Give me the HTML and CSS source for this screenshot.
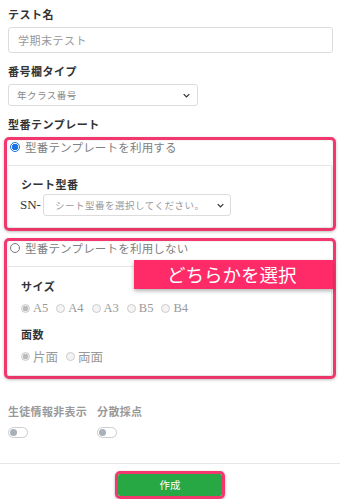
FILE: index.html
```html
<!DOCTYPE html>
<html lang="ja">
<head>
<meta charset="utf-8">
<link rel="stylesheet" href="styles.css">
</head>
<body>
<div class="page">
  <div class="label first">テスト名</div>
  <div class="input">学期末テスト</div>

  <div class="label l2">番号欄タイプ</div>
  <div class="select sel1"><span>年クラス番号</span><svg class="chev" viewBox="0 0 10 6" width="7" height="5"><path d="M1 1l4 4 4-4" fill="none" stroke="#333" stroke-width="1.8"/></svg></div>

  <div class="label l3">型番テンプレート</div>

  <div class="hl box1">
    <div class="radio-row"><span class="radio on"></span><span class="rtext">型番テンプレートを利用する</span></div>
    <div class="card c1">
      <div class="sublabel">シート型番</div>
      <div class="sn-row"><span class="sn">SN-</span><div class="select sel2"><span>シート型番を選択してください。</span><svg class="chev" viewBox="0 0 10 6" width="7" height="5"><path d="M1 1l4 4 4-4" fill="none" stroke="#333" stroke-width="1.8"/></svg></div></div>
    </div>
  </div>

  <div class="hl box2">
    <div class="radio-row"><span class="radio"></span><span class="rtext">型番テンプレートを利用しない</span></div>
    <div class="card c2">
      <div class="sublabel">サイズ</div>
      <div class="opts">
        <span class="opt"><span class="dot sel"></span>A5</span>
        <span class="opt"><span class="dot"></span>A4</span>
        <span class="opt"><span class="dot"></span>A3</span>
        <span class="opt"><span class="dot"></span>B5</span>
        <span class="opt"><span class="dot"></span>B4</span>
      </div>
      <div class="sublabel s2">面数</div>
      <div class="opts">
        <span class="opt"><span class="dot sel"></span>片面</span>
        <span class="opt"><span class="dot"></span>両面</span>
      </div>
    </div>
    <div class="badge">どちらかを選択</div>
  </div>

  <div class="toggles">
    <div class="tg"><div class="tlabel">生徒情報非表示</div><span class="switch"></span></div>
    <div class="tg"><div class="tlabel">分散採点</div><span class="switch"></span></div>
  </div>
</div>
<div class="footer">
  <div class="btn-hl"><div class="btn">作成</div></div>
</div>
</body>
</html>
```

FILE: styles.css
```css
* { box-sizing: border-box; }
html, body { margin: 0; padding: 0; background: #fff; }
body {
  width: 340px;
  font-family: "Liberation Serif", "Noto Sans CJK JP", serif;
  color: #333;
}
.page { padding: 8px 7px 0 8px; }

.label {
  font-size: 11px;
  line-height: 14px;
  font-weight: bold;
  color: #333;
  letter-spacing: 0.5px;
}
.label.l2 { margin-top: 12px; }
.label.l3 { margin-top: 12px; }

.input {
  margin-top: 5px;
  height: 26px;
  border: 1px solid #dcdcdc;
  border-radius: 3px;
  font-size: 11px;
  color: #999;
  padding: 0 9px;
  display: flex;
  align-items: center;
  letter-spacing: 0.5px;
}

.select {
  display: flex;
  align-items: center;
  justify-content: space-between;
  border: 1px solid #dcdcdc;
  border-radius: 3px;
  font-size: 9.5px;
  color: #888;
  letter-spacing: 0.5px;
}
.sel1 {
  margin-top: 5px;
  width: 190px;
  height: 22px;
  padding: 0 7px 0 8px;
}
.chev { display: block; }

.hl {
  position: relative;
  margin: 5px -3px 0 -4px;
  border: 3px solid #f2386e;
  border-radius: 5px;
  box-shadow: 0 1px 3px rgba(0,0,0,0.25), inset 0 0 2px rgba(0,0,0,0.15);
}
.box1 { height: 94px; }
.box2 { margin-top: 7px; height: 141px; }

.radio-row {
  display: flex;
  align-items: center;
  height: 14px;
  padding-left: 3px;
}
.radio {
  width: 10px;
  height: 10px;
  border-radius: 50%;
  border: 1px solid #777;
  background: #fff;
  margin-right: 5px;
  flex: none;
}
.radio.on {
  border: 1px solid #1a73e8;
  background: radial-gradient(circle, #1a73e8 0 3px, #fff 3.5px);
}
.rtext {
  font-size: 11.5px;
  color: #808080;
  letter-spacing: 0.2px;
}

.card {
  margin: 11px 1px 0 1px;
  border-top: 1px solid #e6e6e6;
  border-right: 1px solid #e6e6e6;
  box-shadow: 0 2px 3px rgba(0,0,0,0.08);
  padding: 0 0 0 13px;
}
.c1 { height: 62px; padding-top: 12px; }
.c2 { height: 109px; padding-top: 13px; }

.sublabel {
  font-size: 11px;
  line-height: 14px;
  font-weight: bold;
  color: #333;
  letter-spacing: 0.5px;
}
.sublabel.s2 { margin-top: 13px; }

.sn-row {
  display: flex;
  align-items: center;
  margin-top: 2px;
}
.sn {
  font-size: 13px;
  color: #333;
  margin-right: 2px;
  margin-left: -1px;
}
.sel2 {
  width: 188px;
  height: 22px;
  padding: 0 6px 0 11px;
  font-size: 9.5px;
  color: #999;
}

.opts {
  display: flex;
  align-items: center;
  margin-top: 7px;
  height: 14px;
}
.opt {
  display: flex;
  align-items: center;
  font-size: 12.5px;
  color: #999;
  margin-right: 8px;
}
.dot {
  width: 9px;
  height: 9px;
  border-radius: 50%;
  border: 1px solid #ccc;
  background: #f4f4f4;
  margin-right: 3px;
}
.dot.sel {
  background: radial-gradient(circle, #bbb 0 2.5px, #eee 3px);
}

.badge {
  position: absolute;
  left: 127px;
  top: 19px;
  width: 199px;
  height: 29px;
  background: #ff2a68;
  color: #fff;
  font-family: "Noto Sans CJK JP", sans-serif;
  font-size: 18.5px;
  line-height: 29px;
  padding-left: 33px;
  box-shadow: 0 2px 4px rgba(0,0,0,0.3);
}

.toggles {
  display: flex;
  margin-top: 26px;
  height: 58px;
}
.tg { margin-right: 10px; }
.tlabel {
  font-size: 11px;
  line-height: 14px;
  font-weight: bold;
  color: #999;
  letter-spacing: 0.3px;
}
.switch {
  display: block;
  margin-top: 8px;
  width: 20px;
  height: 11px;
  border: 1px solid #ccc;
  border-radius: 6px;
  position: relative;
  background: #fff;
}
.switch::after {
  content: "";
  position: absolute;
  left: 1px;
  top: 1px;
  width: 7px;
  height: 7px;
  border-radius: 50%;
  background: #aab0b8;
}

.footer {
  border-top: 1px solid #e6e6e6;
  display: flex;
  justify-content: center;
  padding-top: 7px;
}
.btn-hl {
  border: 3px solid #f2386e;
  border-radius: 5px;
  box-shadow: 0 1px 3px rgba(0,0,0,0.3);
}
.btn {
  width: 104px;
  height: 22px;
  background: #28a745;
  border-radius: 2px;
  color: #fff;
  font-family: "Noto Sans CJK JP", sans-serif;
  font-size: 10.5px;
  line-height: 22px;
  text-align: center;
}
```
